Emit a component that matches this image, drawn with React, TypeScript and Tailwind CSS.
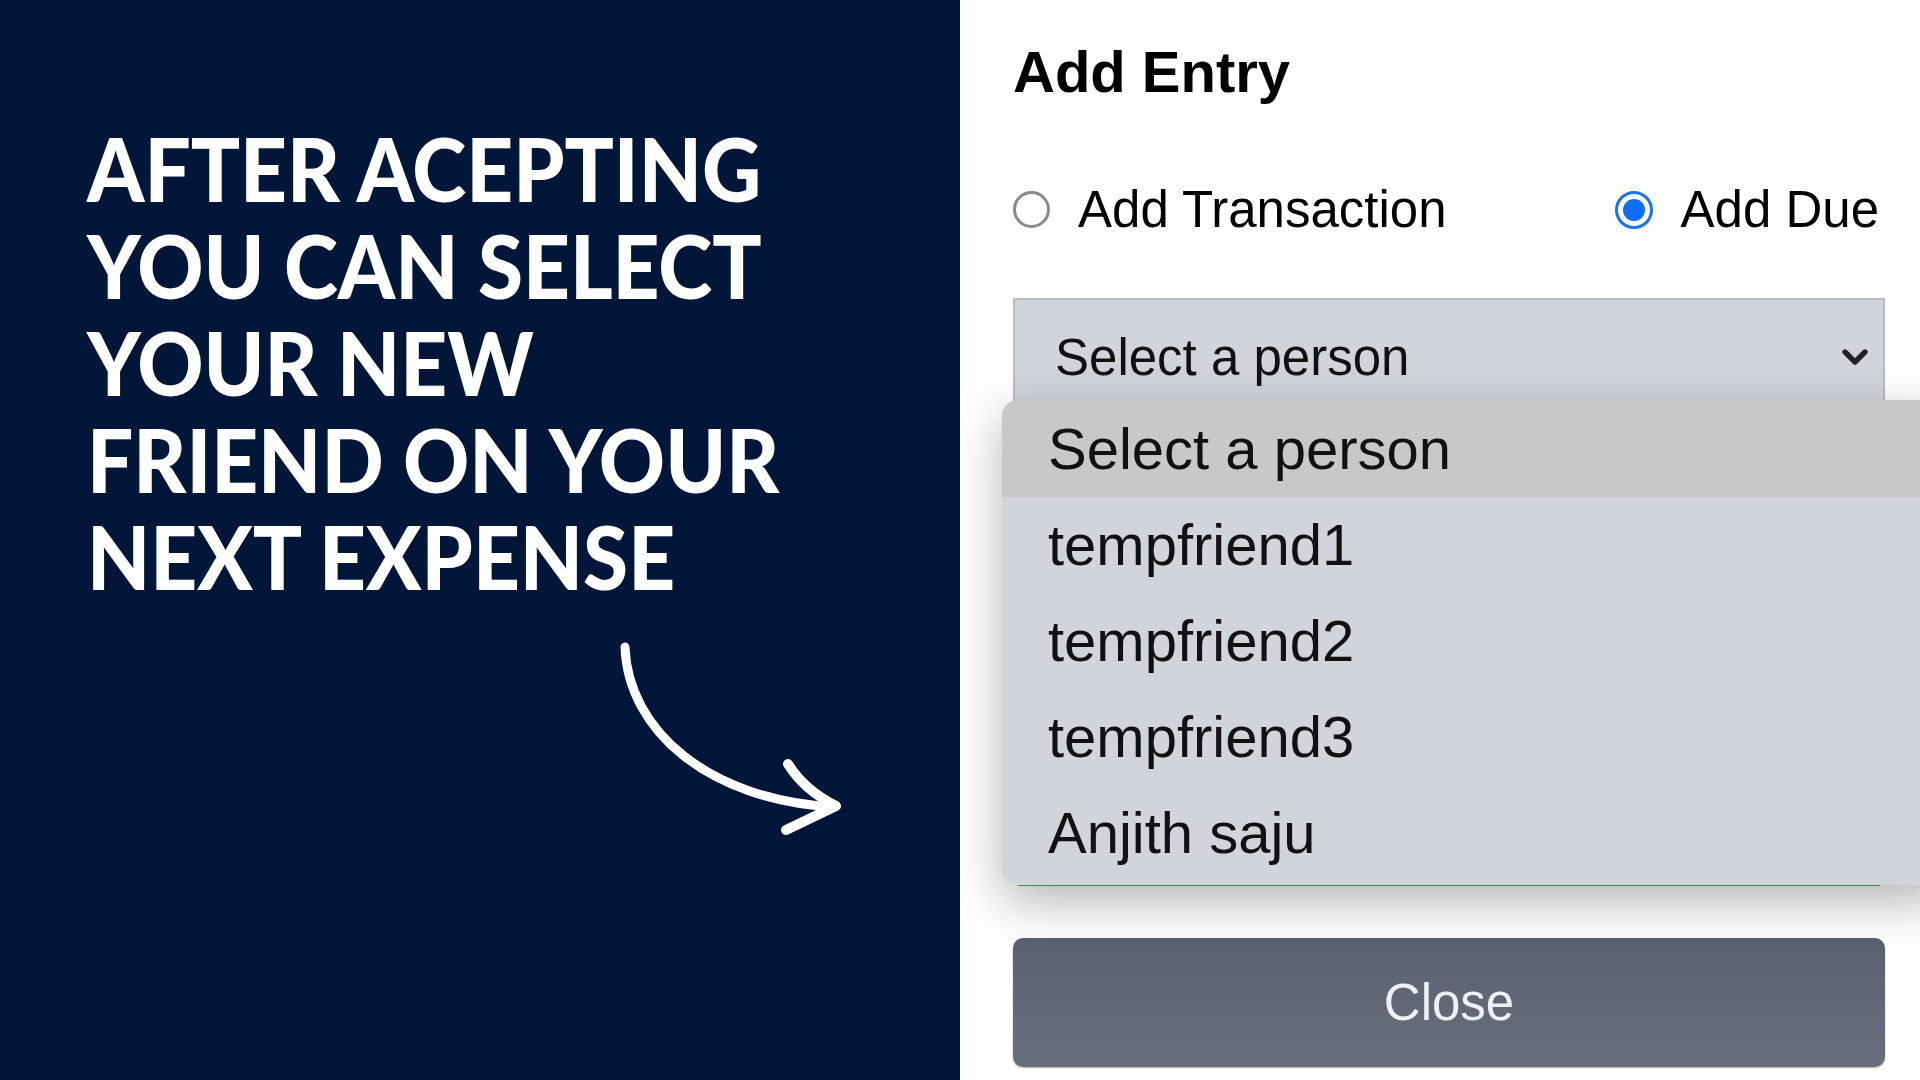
import { ChevronDown } from 'lucide-react';

const friends = ['Select a person', 'tempfriend1', 'tempfriend2', 'tempfriend3', 'Anjith saju'];

const headline = ['AFTER ACEPTING', 'YOU CAN SELECT', 'YOUR NEW', 'FRIEND ON YOUR', 'NEXT EXPENSE'];

function CurvedArrow() {
    return (
        <svg width="260" height="220" viewBox="0 0 260 220" fill="none" className="block">
            <path
                d="M27 17 C 30 100, 110 170, 236 177"
                stroke="white"
                strokeWidth="9"
                strokeLinecap="round"
            />
            <path
                d="M190 134 Q 206 160 238 176 L 188 200"
                stroke="white"
                strokeWidth="10"
                strokeLinecap="round"
                strokeLinejoin="round"
            />
        </svg>
    );
}

export default function App() {
    return (
        <div className="w-[1920px] h-[1080px] flex overflow-hidden bg-white font-['Liberation_Sans',Arial,sans-serif]">
            {/* Left promo panel */}
            <div className="w-[960px] shrink-0 bg-[#011638] pt-[120px] pl-[87px]">
                <div className="font-['Lato',sans-serif] font-black text-white text-[87px] leading-[97px] origin-left scale-x-[0.94]">
                    {headline.map((line) => (
                        <div key={line} className="whitespace-nowrap">{line}</div>
                    ))}
                </div>
                <div className="ml-[511px] mt-[25px]">
                    <CurvedArrow />
                </div>
            </div>

            {/* Right: modal content */}
            <div className="flex-1 relative pl-[53px] pr-[35px] pt-[43px] text-black">
                <h2 className="text-[58px] font-bold leading-none">Add Entry</h2>

                <div className="flex items-center mt-[83px] text-[51px] leading-none">
                    <div className="flex items-center gap-[28px]">
                        <span className="w-[37px] h-[37px] rounded-full border-[3px] border-[#8a8a8a] bg-white" />
                        <span>Add Transaction</span>
                    </div>
                    <div className="flex items-center gap-[28px] ml-[168px]">
                        <span className="w-[38px] h-[38px] rounded-full border-[3px] border-[#1a73f0] bg-white flex items-center justify-center">
                            <span className="w-[22px] h-[22px] rounded-full bg-[#0d6df5]" />
                        </span>
                        <span>Add Due</span>
                    </div>
                </div>

                {/* Select */}
                <div className="mt-[63px] h-[104px] border-2 border-[#b6bcc6] bg-[#d1d5db] flex items-start justify-between pl-[40px] pr-[8px] pt-[32px]">
                    <span className="text-[51px] leading-none text-[#111]">Select a person</span>
                    <ChevronDown size={40} strokeWidth={3.2} className="text-[#222] mt-[5px]" />
                </div>

                {/* field hidden behind the open list */}
                <div className="h-[484px] mx-[5px] border-b-2 border-[#45b06c]" />

                <button className="mt-[52px] w-full h-[129px] rounded-[10px] bg-gradient-to-b from-[#5a6170] to-[#686e7c] shadow-[0_1px_2px_rgba(0,0,0,0.3)] text-[51px] text-[#eef0f3] leading-none">
                    Close
                </button>

                {/* Open dropdown list */}
                <div className="absolute left-[42px] -right-[30px] top-[400px] h-[485px] rounded-[16px] bg-[#d1d5db] overflow-hidden shadow-[0_16px_50px_rgba(0,0,0,0.3)]">
                    {friends.map((name, i) => (
                        <div
                            key={name}
                            className={
                                'flex items-center pl-[46px] text-[58px] leading-none text-[#111] ' +
                                (i === 0 ? 'bg-[#c8c8c8] h-[97px]' : 'h-[96px]')
                            }
                        >
                            {name}
                        </div>
                    ))}
                </div>
            </div>
        </div>
    );
}
